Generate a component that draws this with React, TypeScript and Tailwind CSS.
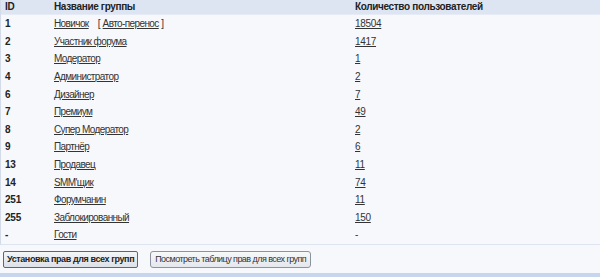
import React from "react";

type Group = { id: string; name: string; count: string; extra?: string };

const groups: Group[] = [
  { id: "1", name: "Новичок", count: "18504", extra: "Авто-перенос" },
  { id: "2", name: "Участник форума", count: "1417" },
  { id: "3", name: "Модератор", count: "1" },
  { id: "4", name: "Администратор", count: "2" },
  { id: "6", name: "Дизайнер", count: "7" },
  { id: "7", name: "Премиум", count: "49" },
  { id: "8", name: "Супер Модератор", count: "2" },
  { id: "9", name: "Партнёр", count: "6" },
  { id: "13", name: "Продавец", count: "11" },
  { id: "14", name: "SMM'щик", count: "74" },
  { id: "251", name: "Форумчанин", count: "11" },
  { id: "255", name: "Заблокированный", count: "150" },
  { id: "-", name: "Гости", count: "-" },
];

export default function App() {
  return (
    <div className="flex flex-col w-[600px] h-[277px] overflow-hidden bg-[#f6f8fc] text-[10px] leading-[12px] text-[#222] font-['Liberation_Sans',Arial,sans-serif]">
      {/* Group list */}
      <div className="shrink-0 h-[245px] border-l border-[#d4dbe8] border-b border-b-[#dfe5f0]">
        <div className="flex h-[15px] items-center bg-[#dde5f3] border-b border-[#e6ebf5] font-bold tracking-[-0.35px]">
          <div className="w-[53px] pl-[4px]">ID</div>
          <div className="w-[301px]">Название группы</div>
          <div>Количество пользователей</div>
        </div>
        {groups.map((g) => (
          <div key={g.id + g.name} className="flex h-[17.6px] pt-px items-center">
            <div className="w-[53px] pl-[4px] font-bold tracking-[-0.2px]">{g.id}</div>
            <div className="w-[301px] text-[#333] tracking-[-0.6px]">
              <span className="underline">{g.name}</span>
              {g.extra && (
                <span className="ml-[9px] tracking-[-0.3px]">
                  [ <span className="underline tracking-[-0.6px]">{g.extra}</span> ]
                </span>
              )}
            </div>
            <div className="text-[#333] tracking-[-0.3px]">
              <span className={g.count === "-" ? "" : "underline"}>{g.count}</span>
            </div>
          </div>
        ))}
      </div>

      {/* Actions */}
      <div className="shrink-0 flex items-center gap-[12px] pl-[3px] pt-[1px] h-[28px] text-[9px]">
        <button className="h-[17px] px-[3px] bg-gradient-to-b from-[#f4f5f7] to-[#dde1e8] border border-[#5f6673] rounded-[2px] font-bold leading-none tracking-[-0.4px]">
          Установка прав для всех групп
        </button>
        <button className="h-[17px] px-[4px] bg-gradient-to-b from-[#f7f8fa] to-[#e4e7ec] border border-[#8d939c] rounded-[3px] leading-none tracking-[-0.55px] text-[#333]">
          Посмотреть таблицу прав для всех групп
        </button>
      </div>
      <div className="shrink-0 h-[4px] bg-[#c8d5ee]" />
    </div>
  );
}
